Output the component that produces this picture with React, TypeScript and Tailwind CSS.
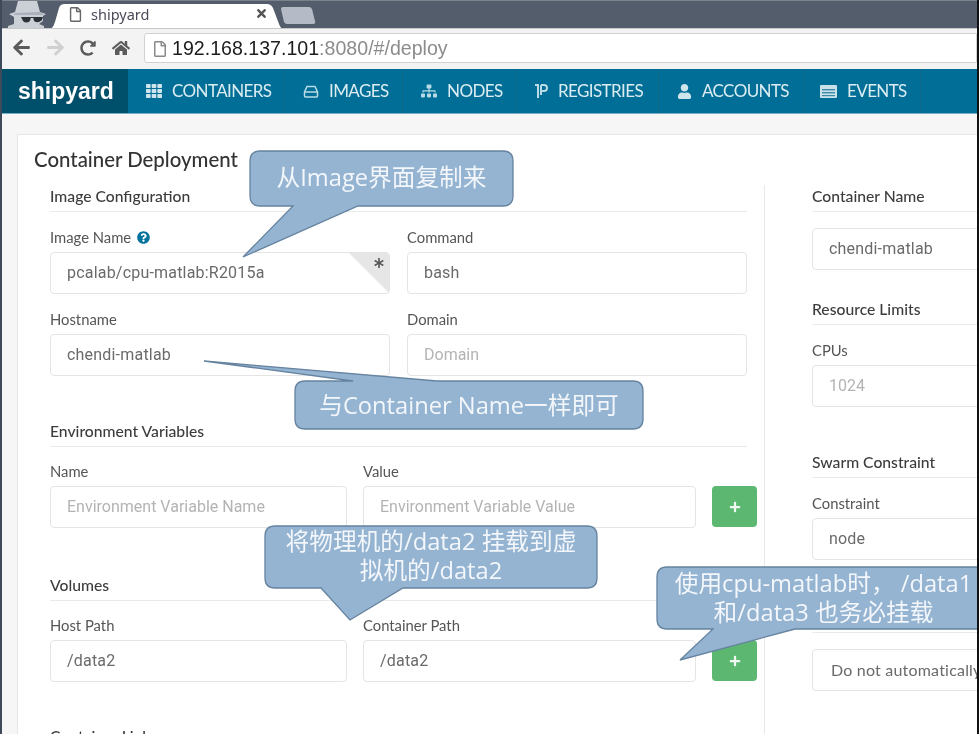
import React from "react";
import { FaTh, FaSitemap, FaUser, FaQuestionCircle, FaAsterisk, FaPlus, FaHome, FaArrowLeft, FaArrowRight, FaRegFile, FaTimes, FaRedoAlt } from "react-icons/fa";

const Incognito = () => (
  <svg width="44" height="28" viewBox="0 0 44 28" className="shrink-0 ml-[6px]">
    <path d="M12 0 L31 0 L34 11 L40 13 L37 15 L37 20 L33 23 L38 25 L38 28 L2 28 L2 25 L8 23 L8 16 L3 13 L9 11 Z" fill="#cbd0d7" />
    <path d="M9 12 L34 11 L38 14 H8 Z" fill="#aab1bb" />
    <path d="M15 16 H25 L24 20 Q20 23 17 20 Z M27 16 H37 L36 19 Q32 23 28 20 Z M25 16 H27 V17 H25 Z" fill="#2e3238" />
  </svg>
);

const Tab = () => (
  <div className="relative w-[234px] h-[25px] mt-[3px] -ml-[1px] flex items-center pb-[5px] shrink-0">
    <svg width="234" height="25" viewBox="0 0 234 25" className="absolute inset-0">
      <path d="M0 25 Q4 25 6 18 L10 4 Q11 0 16 0 H218 Q222 0 224 4 L230 20 Q232 25 234 25 Z" fill="#ffffff" />
    </svg>
    <FaRegFile className="relative ml-[19px] text-[15px] text-[#666]" />
    <span className="relative ml-[8px] text-[14.5px] leading-[20px] text-[#4a4a5a] font-['Noto_Sans',sans-serif]">shipyard</span>
    <FaTimes className="absolute left-[206px] top-[3px] text-[13px] text-[#555]" />
  </div>
);

const NewTab = () => (
  <svg width="36" height="18" viewBox="0 0 36 18" className="shrink-0 mt-[6px] -ml-[3px]">
    <path d="M1 2 Q1 0 3 0 H29 Q31 0 32 2 L35 14 Q36 17 33 17 H7 Q5 17 4 15 Z" fill="#b4bbc6" />
  </svg>
);

const RegistryIcon = () => (
  <svg width="14" height="17" viewBox="0 0 14 17" fill="none" stroke="#b9dbe6" strokeWidth="2" className="shrink-0">
    <path d="M1 2 H4 V15 M7 2 H10 Q13 2 13 5 Q13 8 10 8 H7 M7 2 V12" />
  </svg>
);

const HddIcon = () => (
  <svg width="16" height="13" viewBox="0 0 16 13" fill="none" stroke="#b9dbe6" strokeWidth="1.5" className="shrink-0">
    <path d="M4 1.5 H12 L14.5 7 V11 Q14.5 12 13.5 12 H2.5 Q1.5 12 1.5 11 V7 Z M1.5 7 H14.5" />
  </svg>
);

const EventsIcon = () => (
  <svg width="17" height="13" viewBox="0 0 17 13" className="shrink-0 -ml-[2px]">
    <rect x="0" y="0" width="17" height="13" rx="1" fill="#c9e2ea" />
    <rect x="2" y="4" width="13" height="1.4" fill="#3d8aa8" />
    <rect x="2" y="7" width="13" height="1.4" fill="#3d8aa8" />
    <rect x="2" y="10" width="13" height="1.2" fill="#3d8aa8" />
  </svg>
);

const items: [React.ReactNode, string, string][] = [
  [<FaTh className="text-[16px] text-[#cfe5ec] shrink-0" />, "CONTAINERS", "w-[157px]"],
  [<HddIcon />, "IMAGES", "w-[118px]"],
  [<FaSitemap className="text-[16px] text-[#b9dbe6] shrink-0" />, "NODES", "w-[113px]"],
  [<RegistryIcon />, "REGISTRIES", "w-[143px]"],
  [<FaUser className="text-[15px] text-[#cfe5ec] shrink-0" />, "ACCOUNTS", "w-[145px]"],
  [<EventsIcon />, "EVENTS", "w-[117px]"],
];

const Heading = ({ children, className = "" }: { children?: React.ReactNode; className?: string }) => (
  <div className={"h-[27px] border-b border-[#eaeaea] text-[15.7px] leading-[23px] font-medium text-[#3c3c3c] " + className}>{children}</div>
);

const Label = ({ children }: { children: React.ReactNode }) => (
  <div className="h-[20px] mb-[5px] flex items-center gap-[6px] text-[14.8px] leading-[20px] text-[#555]">{children}</div>
);

const Input = ({ value, placeholder, className = "", lato = false }: { value?: string; placeholder?: string; className?: string; lato?: boolean }) => (
  <div
    className={
      "h-[42px] border border-[#e4e4e4] rounded-[4px] bg-white flex items-center whitespace-nowrap overflow-hidden " +
      (lato ? "pl-[18px] text-[16px] font-['Lato',sans-serif] " : "pl-[16px] text-[16px] font-['Roboto',sans-serif] ") +
      (value ? "text-[#6a6a6a] tracking-[0.2px] " : "text-[#b4b4b4] ") +
      className
    }
  >
    {value ?? placeholder}
  </div>
);

const Field = ({ label, value, placeholder, className = "" }: { label: React.ReactNode; value?: string; placeholder?: string; className?: string }) => (
  <div className={"shrink-0 " + className}>
    <Label>{label}</Label>
    <Input value={value} placeholder={placeholder} />
  </div>
);

const AddButton = () => (
  <div className="w-[45px] h-[41px] ml-[16px] mt-[25px] shrink-0 rounded-[4px] bg-[#5cb870] flex items-center justify-center">
    <FaPlus className="text-[12px] text-[#eef8f0]" />
  </div>
);

const Callouts = () => (
  <svg width="979" height="734" viewBox="0 0 979 734" className="absolute inset-0" fill="#94b4d2" stroke="#66839f" strokeWidth="1.3">
    <path d="M260 151 H503 Q513 151 513 161 V196 Q513 206 503 206 H358 L243 257 L293 206 H260 Q250 206 250 196 V161 Q250 151 260 151 Z" />
    <path d="M305 381 H353 L204 361 L437 381 H633 Q643 381 643 391 V419 Q643 429 633 429 H305 Q295 429 295 419 V391 Q295 381 305 381 Z" />
    <path d="M275 526 H587 Q597 526 597 536 V578 Q597 588 587 588 H403 L350 620 L321 588 H275 Q265 588 265 578 V536 Q265 526 275 526 Z" />
    <path d="M667 567 H990 V629 H795 L680 660 L713 629 H667 Q657 629 657 619 V577 Q657 567 667 567 Z" />
  </svg>
);

const CalloutText = ({ className, lines }: { className: string; lines: string[] }) => (
  <div className={"absolute text-center whitespace-nowrap text-[23.7px] leading-[29px] text-[#f3f6fa] font-['Open_Sans','Noto_Sans_CJK_SC',sans-serif] " + className}>
    {lines.map((l) => (
      <div key={l}>{l}</div>
    ))}
  </div>
);

export default function App() {
  return (
    <div className="relative w-[979px] h-[734px] overflow-hidden bg-[#f6f6f6] border-l-2 border-l-[#3e4a59] border-r-2 border-r-[#111] font-['Lato',sans-serif] blur-[0.5px]">
      {/* tab strip */}
      <div className="h-[28px] bg-[#535d6b] border-t border-t-[#7b828c] flex items-start -ml-[2px] overflow-hidden">
        <Incognito />
        <Tab />
        <NewTab />
      </div>
      {/* toolbar */}
      <div className="h-[41px] bg-[#f3f3f3] border-t border-[#c8c8c8] flex items-start pl-[10px] pt-[4px]">
        <div className="flex items-center h-[29px] text-[#5b5b5b]">
          <FaArrowLeft className="text-[19px]" />
          <FaArrowRight className="text-[19px] ml-[15px] text-[#cfcfcf]" />
          <FaRedoAlt className="text-[16px] ml-[15px]" />
          <FaHome className="text-[18px] ml-[16px]" />
        </div>
        <div className="ml-[14px] grow h-[30px] bg-white border border-[#d2d2d2] rounded-l-[3px] flex items-center pl-[7px] pt-[1px] text-[19.6px] font-['Liberation_Sans',sans-serif]">
          <FaRegFile className="text-[16px] text-[#8a8a8a] mr-[4px]" />
          <span className="text-[#1c1c1c]">192.168.137.101</span>
          <span className="text-[#8c8c8c]">:8080/#/deploy</span>
        </div>
      </div>
      {/* nav */}
      <div className="h-[45px] bg-[#006e96] border-b border-[#73aec4] flex">
        <div className="w-[126px] bg-[#004f6b] flex items-center pl-[16px] text-[23px] font-bold text-white font-['Liberation_Sans',sans-serif]">shipyard</div>
        {items.map(([icon, text, w]) => (
          <div key={text} className={"flex items-center gap-[10px] pl-[18px] border-r border-[#0f6887] text-[17px] tracking-[-0.6px] text-[#dbedf2] " + w}>
            {icon}
            <span>{text}</span>
          </div>
        ))}
      </div>
      {/* content */}
      <div className="pl-[15px] pt-[20px]">
        <div className="w-[1100px] h-[700px] bg-white border border-[#e6e6e6] pl-[16px] pt-[11px]">
          <div className="h-[39px] text-[20.4px] leading-[26px] font-medium text-[#333]">Container Deployment</div>
          <div className="flex ml-[16px]">
            {/* left column */}
            <div className="w-[715px] shrink-0 pr-[17px] border-r border-[#e8e8e8]">
              <Heading>Image Configuration</Heading>
              <div className="flex gap-[17px] mt-[15px]">
                <div className="w-[340px] shrink-0">
                  <Label>
                    Image Name <FaQuestionCircle className="text-[13px] text-[#00729b]" />
                  </Label>
                  <div className="relative">
                    <Input value="pcalab/cpu-matlab:R2015a" />
                    <svg width="41" height="41" viewBox="0 0 41 41" className="absolute right-0 top-0">
                      <path d="M0 1 H37 Q40 1 40 4 V41 Z" fill="#e6e6e6" />
                    </svg>
                    <FaAsterisk className="absolute right-[6px] top-[6px] text-[10px] text-[#555]" />
                  </div>
                </div>
                <Field className="w-[340px]" label="Command" value="bash" />
              </div>
              <div className="flex gap-[17px] mt-[15px]">
                <Field className="w-[340px]" label="Hostname" value="chendi-matlab" />
                <Field className="w-[340px]" label="Domain" placeholder="Domain" />
              </div>
              <Heading className="mt-[44px]">Environment Variables</Heading>
              <div className="flex mt-[14px]">
                <Field className="w-[297px]" label="Name" placeholder="Environment Variable Name" />
                <Field className="w-[333px] ml-[16px]" label="Value" placeholder="Environment Variable Value" />
                <AddButton />
              </div>
              <Heading className="mt-[46px] leading-[21px]">Volumes</Heading>
              <div className="flex mt-[14px]">
                <Field className="w-[297px]" label="Host Path" value="/data2" />
                <Field className="w-[333px] ml-[16px]" label="Container Path" value="/data2" />
                <AddButton />
              </div>
              <Heading className="mt-[43px]">Container Links</Heading>
            </div>
            {/* right column */}
            <div className="w-[300px] shrink-0 pl-[47px]">
              <Heading>Container Name</Heading>
              <Input className="mt-[16px]" value="chendi-matlab" />
              <Heading className="mt-[28px]">Resource Limits</Heading>
              <Field className="mt-[15px]" label="CPUs" placeholder="1024" />
              <Heading className="mt-[44px]" >Swarm Constraint</Heading>
              <Field className="mt-[15px]" label="Constraint" value="node" />
              <Heading className="mt-[46px]" />
              <Input lato className="mt-[16px]" value="Do not automatically restart" />
            </div>
          </div>
        </div>
      </div>
      {/* annotations over the page */}
      <div className="absolute -left-[2px] top-0 w-[979px] h-[734px]">
        <Callouts />
        <CalloutText className="left-[250px] w-[263px] top-[163px]" lines={["从Image界面复制来"]} />
        <CalloutText className="left-[295px] w-[348px] top-[391px]" lines={["与Container Name一样即可"]} />
        <CalloutText className="left-[265px] w-[332px] top-[527px]" lines={["将物理机的/data2 挂载到虚", "拟机的/data2"]} />
        <CalloutText className="left-[657px] w-[333px] top-[569px]" lines={["使用cpu-matlab时， /data1", "和/data3 也务必挂载"]} />
      </div>
    </div>
  );
}
